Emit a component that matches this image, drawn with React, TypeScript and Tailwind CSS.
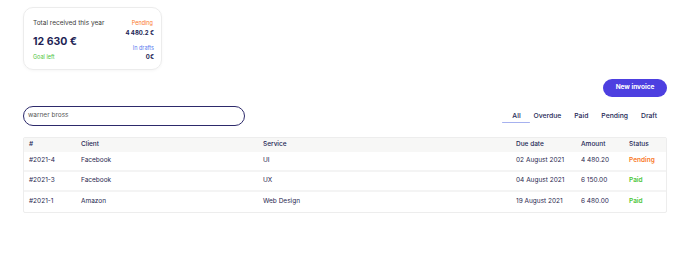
import React from 'react';

const rows = [
  { id: '#2021-4', client: 'Facebook', service: 'UI', due: '02 August 2021', amount: '4 480.20', status: 'Pending' },
  { id: '#2021-3', client: 'Facebook', service: 'UX', due: '04 August 2021', amount: '6 150.00', status: 'Paid' },
  { id: '#2021-1', client: 'Amazon', service: 'Web Design', due: '19 August 2021', amount: '6 480.00', status: 'Paid' },
];

const cols = 'grid grid-cols-[52px_182px_253px_65px_48px_1fr] items-center pl-[5px]';

export default function App() {
  return (
    <div
      className="w-[690px] h-[258px] bg-white px-[23px] pt-[7px] text-[#2a2850]"
      style={{ fontFamily: 'Inter, "Open Sans", sans-serif' }}
    >
      {/* Summary card */}
      <div className="w-[139px] h-[63px] rounded-[10px] border border-[#ececec] shadow-[0_1px_3px_rgba(0,0,0,0.04)] pl-[9px] pr-[7px] pt-[11px] flex justify-between">
        <div className="flex flex-col">
          <span className="text-[6.5px] text-[#3a3a3a] leading-[9px]">Total received this year</span>
          <span className="text-[10.5px] font-bold mt-[8px] leading-[12px] text-[#231f55]">12 630 €</span>
          <span className="text-[5.5px] text-[#4cc63a] mt-[5px] leading-[8px]">Goal left</span>
        </div>
        <div className="flex flex-col items-end">
          <span className="text-[5.5px] text-[#fb7a2c] leading-[8px] mr-[1px]">Pending</span>
          <span className="text-[6px] font-bold mt-[2px] leading-[8px] text-[#231f55]">4 480.2 €</span>
          <span className="text-[5.5px] text-[#5b7cf0] mt-[7px] leading-[8px]">In drafts</span>
          <span className="text-[6px] font-bold mt-[1px] leading-[8px] text-[#231f55]">0€</span>
        </div>
      </div>

      {/* Actions */}
      <div className="flex justify-end mt-[9px]">
        <button className="h-[18px] w-[64px] rounded-full bg-[#4d3fe0] text-white text-[6.5px] font-bold">
          New invoice
        </button>
      </div>

      <div className="flex items-center justify-between mt-[9px] h-[20px]">
        <div className="w-[222px] h-[20px] rounded-full border-[1.5px] border-[#2d2a6b] flex items-center pl-[4px] text-[6.5px] text-[#555]">
          warner bross
        </div>
        <div className="flex items-center text-[6.8px] font-medium mr-[10px] h-[20px] text-[#231f55]">
          <div className="w-[28px] h-[20px] flex items-center justify-center relative">
            All
            <span className="absolute left-0 right-0 bottom-[3px] h-[1.5px] bg-[#a6b1ef] rounded-full" />
          </div>
          <div className="flex gap-[13px] ml-[3px]">
            <span>Overdue</span>
            <span>Paid</span>
            <span>Pending</span>
            <span>Draft</span>
          </div>
        </div>
      </div>

      {/* Table */}
      <div className="mt-[11px] border border-[#ededed] rounded-[2px] text-[6.5px]">
        <div className={`${cols} h-[14px] bg-[#f7f7f6] font-medium text-[#231f55]`}>
          <span>#</span>
          <span>Client</span>
          <span>Service</span>
          <span>Due date</span>
          <span>Amount</span>
          <span>Status</span>
        </div>
        {rows.map((r, i) => (
          <div
            key={r.id}
            className={`${cols} h-[20px] ${i < rows.length - 1 ? 'border-b-2 border-[#f4f4f4]' : ''}`}
          >
            <span>{r.id}</span>
            <span>{r.client}</span>
            <span>{r.service}</span>
            <span>{r.due}</span>
            <span>{r.amount}</span>
            <span
              className={
                r.status === 'Pending'
                  ? 'text-[#f97a2a] font-semibold'
                  : 'text-[#4cc63a] font-semibold'
              }
            >
              {r.status}
            </span>
          </div>
        ))}
      </div>
    </div>
  );
}
